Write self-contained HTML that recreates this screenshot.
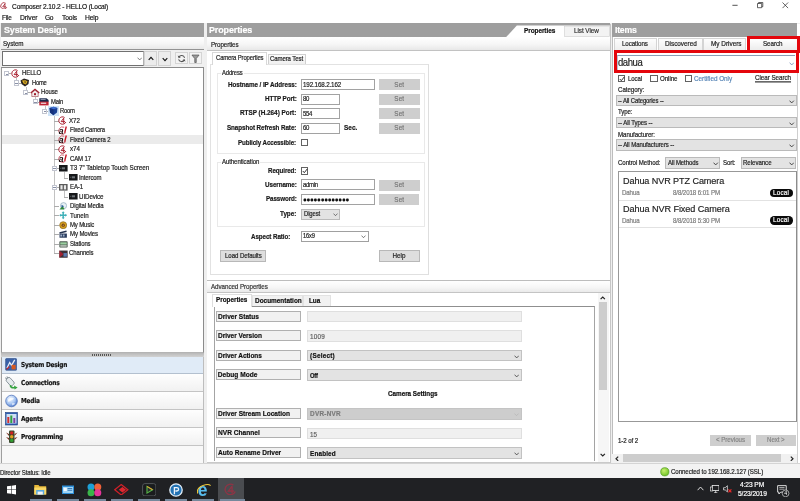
<!DOCTYPE html>
<html><head><meta charset="utf-8"><title>Composer 2.10.2 - HELLO (Local)</title>
<style>
*{box-sizing:border-box;margin:0;padding:0}
html,body{width:800px;height:501px;overflow:hidden;background:#fff}
body{position:relative;font-family:"Liberation Sans",Arial,sans-serif;font-size:6.5px;color:#222;line-height:1}
.a{position:absolute;white-space:nowrap}
.t{-webkit-text-stroke:0.18px currentColor}
.hdr{background:#9e9e9e;height:13.3px;top:23.3px}
.sub{height:12px;top:36.5px;background:linear-gradient(#fff,#f6f6f6 55%,#e8e8e8)}
.inp{background:#fff;border:0.8px solid #a2a2a2}
.btn{background:#cecece}
.cmb{background:#e3e3e3;border:0.6px solid #bababa}
.nav{left:1.5px;width:201.5px;border-bottom:1px solid #c4c4c4;background:linear-gradient(#fefefe,#f1f1f1)}
.pl{background:#f1f1f1;border:0.8px solid #b0b0b0;left:216px;width:84.7px;height:11px}
.pv{left:307.3px;width:214.5px;height:11.5px;margin-top:-0.2px}
.tab{background:linear-gradient(#fdfdfd,#efefef);border:0.6px solid #d0d0d0;border-bottom:none}
.chk{background:#fff;border:0.65px solid #636363;width:7.2px;height:7.2px}
</style></head><body><div id="root" style="position:absolute;left:0;top:0;width:800px;height:501px;will-change:transform">

<div class="a" style="left:0px;top:0px;width:800px;height:11px;background:#fff"></div>
<svg class="a" style="left:0.2px;top:1.6px" width="7.8" height="7.8" viewBox="0 0 9 9"><path d="M6.6 1.5A3.7 3.7 0 1 0 7.9 6" fill="none" stroke="#a2202e" stroke-width="0.95"/><path d="M5.7 2.2L3.1 5.6H7M5.7 2.2V7.4" fill="none" stroke="#a2202e" stroke-width="0.95"/></svg>
<div class="a t" style="left:11.50px;top:1.65px;font-size:7px;letter-spacing:-0.140px;line-height:9.1px;color:#111;transform-origin:0 50%;transform:scale(0.9423,1);">Composer 2.10.2 - HELLO (Local)</div>
<svg class="a" style="left:728px;top:0" width="72" height="11" viewBox="0 0 72 11"><path d="M4.4 5.3h5.2" stroke="#1a1a1a" stroke-width="0.75"/><path d="M29.5 3.5h4.2v4.2h-4.2zM30.6 3.5v-1h4.2v4.2h-1" fill="none" stroke="#222" stroke-width="0.7"/><path d="M54.5 2.5l5.6 5.6M60.1 2.5l-5.6 5.6" stroke="#222" stroke-width="0.7"/></svg>
<div class="a" style="left:0px;top:11px;width:800px;height:12.5px;background:#fff"></div>
<div class="a t" style="left:2.30px;top:12.90px;font-size:7.2px;letter-spacing:-0.236px;line-height:9.4px;color:#111;transform-origin:0 50%;transform:scale(0.8913,1);">File</div>
<div class="a t" style="left:20.00px;top:12.90px;font-size:7.2px;letter-spacing:-0.120px;line-height:9.4px;color:#111;transform-origin:0 50%;transform:scale(0.9469,1);">Driver</div>
<div class="a t" style="left:45.00px;top:12.90px;font-size:7.2px;letter-spacing:-0.284px;line-height:9.4px;color:#111;transform-origin:0 50%;transform:scale(0.9185,1);">Go</div>
<div class="a t" style="left:61.70px;top:12.90px;font-size:7.2px;letter-spacing:-0.155px;line-height:9.4px;color:#111;transform-origin:0 50%;transform:scale(0.9355,1);">Tools</div>
<div class="a t" style="left:85.00px;top:12.90px;font-size:7.2px;letter-spacing:-0.161px;line-height:9.4px;color:#111;transform-origin:0 50%;transform:scale(0.9389,1);">Help</div>
<div class="a" style="left:0px;top:23.1px;width:800px;height:440.4px;background:#efefef"></div>
<div class="a hdr" style="left:1px;width:202.5px"></div>
<div class="a t" style="left:3.50px;top:24.35px;font-size:9.3px;letter-spacing:-0.124px;line-height:12.1px;font-weight:bold;color:#fff;transform-origin:0 50%;transform:scale(0.9651,1.06);">System Design</div>
<div class="a sub" style="left:1px;width:202.5px"></div>
<div class="a t" style="left:2.50px;top:39.75px;font-size:6.5px;letter-spacing:-0.081px;line-height:8.5px;color:#222;transform-origin:0 50%;transform:scale(0.9676,1.12);">System</div>
<div class="a" style="left:1px;top:48.7px;width:203px;height:1.2px;background:#939393"></div>
<div class="a" style="left:1px;top:49.5px;width:202.5px;height:17.5px;background:#f0f0f0"></div>
<div class="a" style="left:2px;top:50.8px;width:141.7px;height:15px;background:#fff;border:1.2px solid #707070;border-right:0.6px solid #b0b0b0"><svg class="a" style="left:133.6px;top:4.9px" width="5.4" height="3.8" viewBox="0 0 5 3.5"><path d="M0.5 0.6L2.5 2.7L4.5 0.6" fill="none" stroke="#555" stroke-width="0.7"/></svg></div>
<div class="a" style="left:144.3px;top:51.3px;width:13px;height:14.3px;background:#ececec;border:0.8px solid #d2d2d2"><svg class="a" style="left:2.8px;top:4.2px" width="6" height="5" viewBox="0 0 6 5"><path d="M0.7 3.8L3 1.3L5.3 3.8" fill="none" stroke="#111" stroke-width="1.1"/></svg></div>
<div class="a" style="left:158px;top:51.3px;width:12.7px;height:14.3px;background:#ececec;border:0.8px solid #d2d2d2"><svg class="a" style="left:2.6px;top:4.4px" width="6" height="5" viewBox="0 0 6 5"><path d="M0.7 1.2L3 3.7L5.3 1.2" fill="none" stroke="#111" stroke-width="1.1"/></svg></div>
<div class="a" style="left:175px;top:52.3px;width:12.6px;height:12px;background:#f3f3f3;border:0.8px solid #d4d4d4"><svg class="a" style="left:1.3px;top:0.9px" width="9.2" height="9.2" viewBox="0 0 8 8"><path d="M6.6 3.4A2.7 2.7 0 0 0 1.6 2.8M1.4 4.6A2.7 2.7 0 0 0 6.4 5.2" fill="none" stroke="#555" stroke-width="0.9"/><path d="M0.6 1.4L1.5 3.6L3.5 2.6zM7.4 6.6L6.5 4.4L4.5 5.4z" fill="#555"/></svg></div>
<div class="a" style="left:189px;top:52.3px;width:12.6px;height:12px;background:#f3f3f3;border:0.8px solid #d4d4d4"><svg class="a" style="left:0.8px;top:0.5px" width="9" height="9.4" viewBox="0 0 8 9"><path d="M0.6 1h6.8L4.7 4.4V8.2H3.3V4.4z" fill="#9a9a9a" stroke="#555" stroke-width="0.7"/></svg></div>
<div class="a" style="left:1px;top:66.7px;width:203px;height:286.3px;background:#fff;border:1.1px solid #8b8b8b;border-left-color:#9a9a9a;border-bottom:0.6px solid #b4b4b4"></div>
<div class="a" style="left:2px;top:134.99px;width:200.5px;height:9.47px;background:#ebebeb"></div>
<div class="a" style="left:16.0px;top:77.64px;width:0;height:2.67px;border-left:0.7px solid #c2c2c2"></div>
<div class="a" style="left:25.5px;top:87.11px;width:0;height:2.67px;border-left:0.7px solid #c2c2c2"></div>
<div class="a" style="left:35.0px;top:96.58px;width:0;height:2.67px;border-left:0.7px solid #c2c2c2"></div>
<div class="a" style="left:44.5px;top:106.05px;width:0;height:2.67px;border-left:0.7px solid #c2c2c2"></div>
<div class="a" style="left:9.1px;top:73.44px;width:2.4000000000000004px;height:0;border-top:0.7px solid #acacac"></div>
<div class="a" style="left:18.6px;top:82.91px;width:2.3999999999999986px;height:0;border-top:0.7px solid #acacac"></div>
<div class="a" style="left:28.1px;top:92.38px;width:2.3999999999999986px;height:0;border-top:0.7px solid #acacac"></div>
<div class="a" style="left:37.6px;top:101.85px;width:2.3999999999999986px;height:0;border-top:0.7px solid #acacac"></div>
<div class="a" style="left:47.1px;top:111.32px;width:2.3999999999999986px;height:0;border-top:0.7px solid #acacac"></div>
<div class="a" style="left:54.0px;top:115.32px;width:0;height:138.05px;border-left:0.7px solid #c2c2c2"></div>
<div class="a" style="left:54.0px;top:120.79px;width:4.5px;height:0;border-top:0.7px solid #acacac"></div>
<div class="a" style="left:54.0px;top:130.26px;width:4.5px;height:0;border-top:0.7px solid #acacac"></div>
<div class="a" style="left:54.0px;top:139.73px;width:4.5px;height:0;border-top:0.7px solid #acacac"></div>
<div class="a" style="left:54.0px;top:149.20px;width:4.5px;height:0;border-top:0.7px solid #acacac"></div>
<div class="a" style="left:54.0px;top:158.67px;width:4.5px;height:0;border-top:0.7px solid #acacac"></div>
<div class="a" style="left:54.0px;top:168.14px;width:4.5px;height:0;border-top:0.7px solid #acacac"></div>
<div class="a" style="left:54.0px;top:187.08px;width:4.5px;height:0;border-top:0.7px solid #acacac"></div>
<div class="a" style="left:54.0px;top:206.02px;width:4.5px;height:0;border-top:0.7px solid #acacac"></div>
<div class="a" style="left:54.0px;top:215.49px;width:4.5px;height:0;border-top:0.7px solid #acacac"></div>
<div class="a" style="left:54.0px;top:224.96px;width:4.5px;height:0;border-top:0.7px solid #acacac"></div>
<div class="a" style="left:54.0px;top:234.43px;width:4.5px;height:0;border-top:0.7px solid #acacac"></div>
<div class="a" style="left:54.0px;top:243.90px;width:4.5px;height:0;border-top:0.7px solid #acacac"></div>
<div class="a" style="left:54.0px;top:253.37px;width:4.5px;height:0;border-top:0.7px solid #acacac"></div>
<div class="a" style="left:63.5px;top:172.14px;width:0;height:5.47px;border-left:0.7px solid #c2c2c2"></div>
<div class="a" style="left:63.5px;top:177.61px;width:4.0px;height:0;border-top:0.7px solid #acacac"></div>
<div class="a" style="left:63.5px;top:191.08px;width:0;height:5.47px;border-left:0.7px solid #c2c2c2"></div>
<div class="a" style="left:63.5px;top:196.55px;width:4.0px;height:0;border-top:0.7px solid #acacac"></div>
<div class="a" style="left:4.0px;top:70.90px;width:5.2px;height:5.2px;border:0.6px solid #c2c5d0;background:#fff"><div class="a" style="left:0.9px;top:1.7px;width:2.2px;height:0.6px;background:#8890a6"></div></div>
<svg class="a" style="left:11.0px;top:69.0px" width="9" height="9" viewBox="0 0 9 9"><path d="M6.6 1.5A3.7 3.7 0 1 0 7.9 6" fill="none" stroke="#a81c2c" stroke-width="0.95"/><path d="M5.7 2.2L3.1 5.6H7M5.7 2.2V7.4" fill="none" stroke="#a81c2c" stroke-width="0.95"/></svg>
<div class="a t" style="left:22.30px;top:69.48px;font-size:6.4px;letter-spacing:-0.151px;line-height:8.3px;color:#222;transform-origin:0 50%;transform:scale(0.9489,1.12);">HELLO</div>
<div class="a" style="left:13.5px;top:80.37px;width:5.2px;height:5.2px;border:0.6px solid #c2c5d0;background:#fff"><div class="a" style="left:0.9px;top:1.7px;width:2.2px;height:0.6px;background:#8890a6"></div></div>
<svg class="a" style="left:20.45px;top:78.47px" width="10" height="9" viewBox="0 0 10 9"><path d="M0.5 2.5L4 0.5L9 2L8.5 6L5 8.5L1.5 6z" fill="#2b2420"/><path d="M2 2.5L5.5 2.2L7.5 3.5L6 6.5L3.5 5.5z" fill="#e0b020"/><path d="M4 3.4L6 3.6L5.2 5.4z" fill="#4a3a20"/></svg>
<div class="a t" style="left:32.00px;top:78.95px;font-size:6.4px;letter-spacing:-0.283px;line-height:8.3px;color:#222;transform-origin:0 50%;transform:scale(0.9096,1.12);">Home</div>
<div class="a" style="left:23.0px;top:89.84px;width:5.2px;height:5.2px;border:0.6px solid #c2c5d0;background:#fff"><div class="a" style="left:0.9px;top:1.7px;width:2.2px;height:0.6px;background:#8890a6"></div></div>
<svg class="a" style="left:29.9px;top:87.94px" width="10" height="9" viewBox="0 0 10 9"><path d="M0.3 4.6L5 0.5L9.7 4.6L8.7 5.4L5 2.2L1.3 5.4z" fill="#a01c2c"/><path d="M1.8 4.8L5 2.2L8.2 4.8V8.6H1.8z" fill="#f4eeee" stroke="#8a2030" stroke-width="0.55"/><rect x="4" y="5.2" width="2" height="2" fill="#a01c2c"/></svg>
<div class="a t" style="left:41.25px;top:88.42px;font-size:6.4px;letter-spacing:-0.148px;line-height:8.3px;color:#222;transform-origin:0 50%;transform:scale(0.9432,1.12);">House</div>
<div class="a" style="left:32.5px;top:99.31px;width:5.2px;height:5.2px;border:0.6px solid #c2c5d0;background:#fff"><div class="a" style="left:0.9px;top:1.7px;width:2.2px;height:0.6px;background:#8890a6"></div></div>
<svg class="a" style="left:39.349999999999994px;top:97.41px" width="10" height="9" viewBox="0 0 10 9"><path d="M0.3 1.2H7.5L9.6 3V5H0.3z" fill="#1c2a4c"/><path d="M1.6 2.4H6.6" stroke="#c8d0e0" stroke-width="0.7"/><path d="M0.3 4.6H9.6V8.4H0.3z" fill="#c02434"/><rect x="1.8" y="5.6" width="5.4" height="1.3" fill="#ecd4d6"/></svg>
<div class="a t" style="left:50.75px;top:97.90px;font-size:6.4px;letter-spacing:-0.174px;line-height:8.3px;color:#222;transform-origin:0 50%;transform:scale(0.9298,1.12);">Main</div>
<div class="a" style="left:42.0px;top:108.78px;width:5.2px;height:5.2px;border:0.6px solid #c2c5d0;background:#fff"><div class="a" style="left:0.9px;top:1.7px;width:2.2px;height:0.6px;background:#8890a6"></div></div>
<svg class="a" style="left:47.8px;top:106.38px" width="11" height="10" viewBox="0 0 11 10"><rect x="0" y="0" width="11" height="10" fill="#cfe3f7"/><path d="M1.5 2L5.5 0.8L9.5 2L9 6.5L5.5 9.2L2 6.5z" fill="#1b3f92"/><path d="M1.5 2L5.5 3.2L9.5 2L5.5 0.8z" fill="#3e6fd0"/><path d="M5.5 3.2V9.2L2 6.5L1.5 2z" fill="#15307a"/></svg>
<div class="a t" style="left:60.25px;top:107.37px;font-size:6.4px;letter-spacing:-0.253px;line-height:8.3px;color:#222;transform-origin:0 50%;transform:scale(0.9184,1.12);">Room</div>
<svg class="a" style="left:57.8px;top:116.35px" width="9" height="9" viewBox="0 0 9 9"><path d="M6.6 1.5A3.7 3.7 0 1 0 7.9 6" fill="none" stroke="#a81c2c" stroke-width="0.95"/><path d="M5.7 2.2L3.1 5.6H7M5.7 2.2V7.4" fill="none" stroke="#a81c2c" stroke-width="0.95"/></svg>
<div class="a t" style="left:69.25px;top:116.84px;font-size:6.4px;letter-spacing:-0.088px;line-height:8.3px;color:#222;transform-origin:0 50%;transform:scale(0.9664,1.12);">X72</div>
<svg class="a" style="left:57.8px;top:125.82px" width="10" height="9" viewBox="0 0 10 9"><path d="M6.2 1.2A3.9 3.7 0 1 0 7.6 7" fill="none" stroke="#c0283a" stroke-width="0.7"/><text x="0.7" y="7.7" font-family="Liberation Sans,sans-serif" font-size="8.6" font-weight="bold" font-style="italic" fill="#1c0a0c">a</text><path d="M8.3 0.5L6.7 6.9" stroke="#c41424" stroke-width="1.35"/></svg>
<div class="a t" style="left:69.50px;top:126.31px;font-size:6.4px;letter-spacing:-0.188px;line-height:8.3px;color:#222;transform-origin:0 50%;transform:scale(0.9225,1.12);">Fixed Camera</div>
<svg class="a" style="left:57.8px;top:135.29px" width="10" height="9" viewBox="0 0 10 9"><path d="M6.2 1.2A3.9 3.7 0 1 0 7.6 7" fill="none" stroke="#c0283a" stroke-width="0.7"/><text x="0.7" y="7.7" font-family="Liberation Sans,sans-serif" font-size="8.6" font-weight="bold" font-style="italic" fill="#1c0a0c">a</text><path d="M8.3 0.5L6.7 6.9" stroke="#c41424" stroke-width="1.35"/></svg>
<div class="a t" style="left:69.50px;top:135.78px;font-size:6.4px;letter-spacing:-0.154px;line-height:8.3px;color:#222;transform-origin:0 50%;transform:scale(0.9337,1.12);">Fixed Camera 2</div>
<svg class="a" style="left:57.8px;top:144.76px" width="9" height="9" viewBox="0 0 9 9"><path d="M6.6 1.5A3.7 3.7 0 1 0 7.9 6" fill="none" stroke="#a81c2c" stroke-width="0.95"/><path d="M5.7 2.2L3.1 5.6H7M5.7 2.2V7.4" fill="none" stroke="#a81c2c" stroke-width="0.95"/></svg>
<div class="a t" style="left:69.50px;top:145.25px;font-size:6.4px;letter-spacing:-0.078px;line-height:8.3px;color:#222;transform-origin:0 50%;transform:scale(0.9669,1.12);">x74</div>
<svg class="a" style="left:57.8px;top:154.23px" width="10" height="9" viewBox="0 0 10 9"><path d="M6.2 1.2A3.9 3.7 0 1 0 7.6 7" fill="none" stroke="#c0283a" stroke-width="0.7"/><text x="0.7" y="7.7" font-family="Liberation Sans,sans-serif" font-size="8.6" font-weight="bold" font-style="italic" fill="#1c0a0c">a</text><path d="M8.3 0.5L6.7 6.9" stroke="#c41424" stroke-width="1.35"/></svg>
<div class="a t" style="left:69.50px;top:154.72px;font-size:6.4px;letter-spacing:-0.149px;line-height:8.3px;color:#222;transform-origin:0 50%;transform:scale(0.9450,1.12);">CAM 17</div>
<div class="a" style="left:51.5px;top:165.60px;width:5.2px;height:5.2px;border:0.6px solid #c2c5d0;background:#fff"><div class="a" style="left:0.9px;top:1.7px;width:2.2px;height:0.6px;background:#8890a6"></div></div>
<svg class="a" style="left:59.0px;top:164.8px" width="10" height="7" viewBox="0 0 10 7"><rect x="0" y="0" width="8.6" height="6.5" fill="#16181a"/><rect x="2.8" y="2.3" width="3.2" height="2" fill="#6d7378"/><rect x="1" y="2.8" width="1.2" height="1" fill="#50555a"/></svg>
<div class="a t" style="left:69.50px;top:164.19px;font-size:6.4px;letter-spacing:-0.037px;line-height:8.3px;color:#222;transform-origin:0 50%;transform:scale(0.9818,1.12);">T3 7" Tabletop Touch Screen</div>
<svg class="a" style="left:68.7px;top:174.27px" width="10" height="7" viewBox="0 0 10 7"><rect x="0" y="0" width="8.6" height="6.5" fill="#16181a"/><rect x="2.8" y="2.3" width="3.2" height="2" fill="#6d7378"/><rect x="1" y="2.8" width="1.2" height="1" fill="#50555a"/></svg>
<div class="a t" style="left:79.00px;top:173.66px;font-size:6.4px;letter-spacing:-0.127px;line-height:8.3px;color:#222;transform-origin:0 50%;transform:scale(0.9422,1.12);">Intercom</div>
<div class="a" style="left:51.5px;top:184.54px;width:5.2px;height:5.2px;border:0.6px solid #c2c5d0;background:#fff"><div class="a" style="left:0.9px;top:1.7px;width:2.2px;height:0.6px;background:#8890a6"></div></div>
<svg class="a" style="left:59.0px;top:183.74px" width="10" height="7" viewBox="0 0 10 7"><rect x="0" y="0" width="8.6" height="6.6" fill="#5a5a5a"/><rect x="1.4" y="1.2" width="2.2" height="4.2" fill="#e8e8e8"/><rect x="4.9" y="1.2" width="2.2" height="4.2" fill="#e8e8e8"/></svg>
<div class="a t" style="left:69.50px;top:183.13px;font-size:6.4px;letter-spacing:-0.130px;line-height:8.3px;color:#222;transform-origin:0 50%;transform:scale(0.9482,1.12);">EA-1</div>
<svg class="a" style="left:68.7px;top:193.21px" width="10" height="7" viewBox="0 0 10 7"><rect x="0" y="0" width="8.6" height="6.5" fill="#16181a"/><rect x="2.8" y="2.3" width="3.2" height="2" fill="#6d7378"/><rect x="1" y="2.8" width="1.2" height="1" fill="#50555a"/></svg>
<div class="a t" style="left:79.00px;top:192.59px;font-size:6.4px;letter-spacing:-0.076px;line-height:8.3px;color:#222;transform-origin:0 50%;transform:scale(0.9662,1.12);">UIDevice</div>
<svg class="a" style="left:59.0px;top:201.98000000000002px" width="8.4" height="8.4" viewBox="0 0 10 10"><circle cx="5.4" cy="4.4" r="3.7" fill="#e9f1f5" stroke="#7fa0b0" stroke-width="0.7"/><path d="M0.5 9L4.5 4.5L6.5 9z" fill="#2f8a3a"/><path d="M3 3.2L6.2 5L3 6.6z" fill="#2a5f9a"/></svg>
<div class="a t" style="left:69.50px;top:202.07px;font-size:6.4px;letter-spacing:-0.114px;line-height:8.3px;color:#222;transform-origin:0 50%;transform:scale(0.9433,1.12);">Digital Media</div>
<svg class="a" style="left:59.0px;top:211.45000000000002px" width="8.4" height="8.4" viewBox="0 0 10 10"><path d="M5 0.3L6.8 2.4H5.9V4.1H7.6V3.2L9.7 5L7.6 6.8V5.9H5.9V7.6H6.8L5 9.7L3.2 7.6H4.1V5.9H2.4V6.8L0.3 5L2.4 3.2V4.1H4.1V2.4H3.2z" fill="#3fb0b8"/></svg>
<div class="a t" style="left:69.50px;top:211.53px;font-size:6.4px;letter-spacing:-0.082px;line-height:8.3px;color:#222;transform-origin:0 50%;transform:scale(0.9638,1.12);">TuneIn</div>
<svg class="a" style="left:59.0px;top:220.92000000000002px" width="8.4" height="8.4" viewBox="0 0 10 10"><circle cx="5" cy="5" r="4.2" fill="#d8a020" stroke="#7a5a10" stroke-width="0.7"/><circle cx="5" cy="5" r="1.9" fill="#6a3a18"/><circle cx="5" cy="5" r="0.7" fill="#e8c050"/></svg>
<div class="a t" style="left:69.50px;top:221.01px;font-size:6.4px;letter-spacing:-0.148px;line-height:8.3px;color:#222;transform-origin:0 50%;transform:scale(0.9385,1.12);">My Music</div>
<svg class="a" style="left:59.0px;top:230.39000000000001px" width="8.4" height="8.4" viewBox="0 0 10 10"><path d="M0.4 2.6L8.8 0.6L9.2 2.4L0.8 4.4z" fill="#23324e"/><rect x="0.6" y="4.2" width="8.8" height="5" fill="#2a3c5e"/><rect x="1.6" y="5.4" width="2" height="2.4" fill="#9fb0c8"/><rect x="4.6" y="5.4" width="2" height="2.4" fill="#9fb0c8"/></svg>
<div class="a t" style="left:69.50px;top:230.47px;font-size:6.4px;letter-spacing:-0.121px;line-height:8.3px;color:#222;transform-origin:0 50%;transform:scale(0.9494,1.12);">My Movies</div>
<svg class="a" style="left:58.8px;top:240.06px" width="9" height="8.1" viewBox="0 0 10 9"><rect x="0.4" y="1.4" width="9.2" height="7" rx="0.8" fill="#4a5a50"/><rect x="1.4" y="2.6" width="7.2" height="2.4" fill="#9ad0a0"/><rect x="1.4" y="5.8" width="7.2" height="1.6" fill="#c8d0c8"/></svg>
<div class="a t" style="left:69.50px;top:239.95px;font-size:6.4px;letter-spacing:-0.141px;line-height:8.3px;color:#222;transform-origin:0 50%;transform:scale(0.9319,1.12);">Stations</div>
<svg class="a" style="left:58.8px;top:249.53px" width="9" height="8.1" viewBox="0 0 10 9"><rect x="0.4" y="0.6" width="9.2" height="8" fill="#3a3036"/><path d="M0.4 0.6L5 4.6L0.4 8.6z" fill="#a02030"/><rect x="5" y="3.4" width="3.8" height="4" fill="#5a7ab0"/></svg>
<div class="a t" style="left:69.30px;top:249.41px;font-size:6.4px;letter-spacing:-0.137px;line-height:8.3px;color:#222;transform-origin:0 50%;transform:scale(0.9425,1.12);">Channels</div>
<div class="a" style="left:1px;top:352.7px;width:203px;height:4.4px;background:linear-gradient(#b9b9b9,#d2d2d2)"></div>
<div class="a" style="left:92px;top:354px;width:19px;height:1.6px;background:repeating-linear-gradient(90deg,#555 0 1px,transparent 1px 2px)"></div>
<div class="a" style="left:1px;top:357px;width:202.5px;height:106.5px;background:#f8f8f8;border:1px solid #bdbdbd;border-left:1px solid #9f9f9f"></div>
<div class="a nav" style="top:357px;height:16.8px;background:#e0ebf7;border-bottom:1px solid #b3c0cf"></div>
<div class="a t" style="left:20.75px;top:361.40px;font-size:6.3px;letter-spacing:-0.219px;line-height:8.2px;font-weight:bold;color:#111;font-family:&quot;DejaVu Sans&quot;,sans-serif;transform-origin:0 50%;transform:scale(0.9251,1.08);">System Design</div>
<div class="a nav" style="top:374.3px;height:17.8px"></div>
<div class="a t" style="left:20.90px;top:379.20px;font-size:6.3px;letter-spacing:-0.194px;line-height:8.2px;font-weight:bold;color:#111;font-family:&quot;DejaVu Sans&quot;,sans-serif;transform-origin:0 50%;transform:scale(0.9318,1.08);">Connections</div>
<div class="a nav" style="top:392.3px;height:17.5px"></div>
<div class="a t" style="left:20.90px;top:396.60px;font-size:6.3px;letter-spacing:-0.249px;line-height:8.2px;font-weight:bold;color:#111;font-family:&quot;DejaVu Sans&quot;,sans-serif;transform-origin:0 50%;transform:scale(0.9200,1.08);">Media</div>
<div class="a nav" style="top:410.2px;height:17.5px"></div>
<div class="a t" style="left:20.90px;top:414.90px;font-size:6.3px;letter-spacing:-0.216px;line-height:8.2px;font-weight:bold;color:#111;font-family:&quot;DejaVu Sans&quot;,sans-serif;transform-origin:0 50%;transform:scale(0.9276,1.08);">Agents</div>
<div class="a nav" style="top:428px;height:17.8px"></div>
<div class="a t" style="left:20.90px;top:432.80px;font-size:6.3px;letter-spacing:-0.244px;line-height:8.2px;font-weight:bold;color:#111;font-family:&quot;DejaVu Sans&quot;,sans-serif;transform-origin:0 50%;transform:scale(0.9228,1.08);">Programming</div>
<svg class="a" style="left:5px;top:358.3px" width="12.2" height="12.8" viewBox="0 0 13 14"><rect x="0.5" y="0.5" width="12" height="13" rx="1" fill="#3a62a8" stroke="#22407a" stroke-width="0.6"/><path d="M2 11L5 5L7 8L10.5 2" fill="none" stroke="#e8eef8" stroke-width="1.4"/><rect x="7" y="7.5" width="4.5" height="5" fill="#d85a20"/><path d="M1.5 12.5L4.5 9.5" stroke="#d82020" stroke-width="1.3"/></svg>
<svg class="a" style="left:5px;top:376px" width="13" height="14" viewBox="0 0 13 14"><g transform="rotate(-42 5.5 6)"><rect x="3" y="1.2" width="5" height="8.6" rx="1.6" fill="#e6eaec" stroke="#7c8890" stroke-width="0.8"/><rect x="4.2" y="-0.6" width="0.9" height="2" fill="#7c8890"/><rect x="5.9" y="-0.6" width="0.9" height="2" fill="#7c8890"/></g><path d="M5.2 9.2Q6.2 12.6 10 11.6" fill="none" stroke="#35a33f" stroke-width="1.5"/><path d="M9 9.4L12.6 11.4L9.6 13.6z" fill="#35a33f"/></svg>
<svg class="a" style="left:5px;top:394px" width="13" height="14" viewBox="0 0 13 14"><defs><radialGradient id="mg" cx="0.4" cy="0.32" r="0.75"><stop offset="0" stop-color="#f4f8ff"/><stop offset="0.55" stop-color="#a8c6f2"/><stop offset="1" stop-color="#3f6cc4"/></radialGradient></defs><circle cx="6.5" cy="7" r="5.8" fill="url(#mg)" stroke="#4468b4" stroke-width="0.7"/><path d="M3 5.5Q6 3 9 4.2Q8 6.2 5.8 6.6Q4.4 8.2 3 7.6z" fill="#ffffff" opacity="0.75"/><path d="M7 9.2Q9 8.4 10.2 9.6Q9 11.6 7 11.2z" fill="#eef4ff" opacity="0.7"/></svg>
<svg class="a" style="left:5px;top:411.7px" width="13" height="14" viewBox="0 0 13 14"><rect x="0.5" y="0.5" width="12" height="12.5" fill="#2f5fb0" stroke="#1f3f80" stroke-width="0.6"/><rect x="1.5" y="2" width="10" height="9.5" fill="#cfe0f5"/><rect x="2.3" y="5" width="2" height="6" fill="#d03030"/><rect x="5.3" y="3.5" width="2" height="7.5" fill="#30a040"/><rect x="8.3" y="6" width="2" height="5" fill="#8040a0"/></svg>
<svg class="a" style="left:5px;top:429.5px" width="13" height="14" viewBox="0 0 13 14"><rect x="4" y="0.5" width="5.5" height="12.5" rx="1" fill="#3a4a30"/><circle cx="6.7" cy="3" r="1.7" fill="#d02020"/><circle cx="6.7" cy="6.7" r="1.7" fill="#e0a020"/><circle cx="6.7" cy="10.4" r="1.7" fill="#30a030"/><path d="M1 2.5L4 4V6zM12.5 2.5L9.5 4V6zM1 7L4 8V10zM12.5 7L9.5 8V10z" fill="#7a3020"/></svg>
<div class="a" style="left:206.5px;top:23.5px;width:403px;height:439.5px;background:#fff"></div>
<div class="a hdr" style="left:206.5px;width:403px"></div>
<div class="a t" style="left:208.75px;top:24.35px;font-size:9.3px;letter-spacing:-0.114px;line-height:12.1px;font-weight:bold;color:#fff;transform-origin:0 50%;transform:scale(0.9641,1.06);">Properties</div>
<svg class="a" style="left:500px;top:23.1px" width="110" height="14.4" viewBox="0 0 110 14.4"><path d="M16.8 2.6H110V14.4H5.8z" fill="#fff"/><rect x="64.6" y="3.1" width="45" height="10.5" fill="#f3f3f3" stroke="#cdcdcd" stroke-width="0.6"/></svg>
<div class="a t" style="left:524.25px;top:26.65px;font-size:6.7px;letter-spacing:-0.078px;line-height:8.7px;font-weight:bold;color:#111;transform-origin:0 50%;transform:scale(0.9658,1.1);">Properties</div>
<div class="a t" style="left:574.25px;top:26.70px;font-size:6.6px;letter-spacing:-0.071px;line-height:8.6px;color:#333;transform-origin:0 50%;transform:scale(0.9648,1.05);">List View</div>
<div class="a sub" style="left:206.5px;width:403px;height:13.5px"></div>
<div class="a t" style="left:211.25px;top:40.55px;font-size:6.5px;letter-spacing:-0.089px;line-height:8.5px;color:#222;transform-origin:0 50%;transform:scale(0.9570,1.12);">Properties</div>
<div class="a" style="left:206.5px;top:50.2px;width:403px;height:1px;background:#c2c2c2"></div>
<div class="a" style="left:210px;top:64px;width:219px;height:211px;background:#fff;border:0.8px solid #e2e2e2;border-right:1.4px solid #dedede;border-bottom:1.4px solid #e0e0e0"></div>
<div class="a tab" style="left:211.5px;top:52px;width:55.5px;height:12.6px;background:#fff;border-color:#d8d8d8"></div>
<div class="a tab" style="left:267.5px;top:54.3px;width:38.5px;height:9.8px"></div>
<div class="a t" style="left:215.50px;top:54.45px;font-size:6.4px;letter-spacing:-0.157px;line-height:8.3px;color:#222;transform-origin:0 50%;transform:scale(0.9306,1.12);">Camera Properties</div>
<div class="a t" style="left:270.00px;top:55.45px;font-size:6.4px;letter-spacing:-0.121px;line-height:8.3px;color:#222;transform-origin:0 50%;transform:scale(0.9475,1.12);">Camera Test</div>
<div class="a" style="left:217px;top:72.5px;width:207.5px;height:81px;border:0.8px solid #e9e9e9"></div>
<div class="a" style="left:221px;top:70.5px;width:22.5px;height:4px;background:#fff"></div>
<div class="a t" style="left:222.00px;top:68.60px;font-size:6.3px;letter-spacing:-0.160px;line-height:8.2px;color:#222;transform-origin:0 50%;transform:scale(0.9322,1.12);">Address</div>
<div class="a" style="left:217px;top:161.5px;width:207.5px;height:65px;border:0.8px solid #e9e9e9"></div>
<div class="a" style="left:221px;top:159.5px;width:39.25px;height:4px;background:#fff"></div>
<div class="a t" style="left:222.00px;top:157.60px;font-size:6.3px;letter-spacing:-0.080px;line-height:8.2px;color:#222;transform-origin:0 50%;transform:scale(0.9597,1.12);">Authentication</div>
<div class="a t" style="left:227.50px;top:80.75px;font-size:6.5px;letter-spacing:-0.071px;line-height:8.5px;font-weight:bold;color:#1a1a1a;transform-origin:0 50%;transform:scale(0.9686,1.2);">Hostname / IP Address:</div>
<div class="a inp" style="left:301px;top:79.4px;width:73.5px;height:10.9px"></div>
<div class="a t" style="left:303.10px;top:80.80px;font-size:6.7px;letter-spacing:-0.155px;line-height:8.7px;color:#1c1c1c;transform-origin:0 50%;transform:scale(0.9342,1.12);">192.168.2.162</div>
<div class="a btn" style="left:379px;top:79.1px;width:40.5px;height:11px;"></div>
<div class="a t" style="left:394.30px;top:80.60px;font-size:6.3px;letter-spacing:0.148px;line-height:8.2px;color:#757575;transform:scaleY(1.12);">Set</div>
<div class="a t" style="left:264.50px;top:95.05px;font-size:6.5px;letter-spacing:-0.084px;line-height:8.5px;font-weight:bold;color:#1a1a1a;transform-origin:0 50%;transform:scale(0.9641,1.2);">HTTP Port:</div>
<div class="a inp" style="left:301px;top:93.7px;width:38.5px;height:10.9px"></div>
<div class="a t" style="left:303.10px;top:95.10px;font-size:6.7px;letter-spacing:-0.291px;line-height:8.7px;color:#1c1c1c;transform-origin:0 50%;transform:scale(0.8951,1.12);">80</div>
<div class="a btn" style="left:379px;top:93.7px;width:40.5px;height:11px;"></div>
<div class="a t" style="left:394.30px;top:95.20px;font-size:6.3px;letter-spacing:0.148px;line-height:8.2px;color:#757575;transform:scaleY(1.12);">Set</div>
<div class="a t" style="left:240.00px;top:109.45px;font-size:6.5px;letter-spacing:-0.031px;line-height:8.5px;font-weight:bold;color:#1a1a1a;transform-origin:0 50%;transform:scale(0.9858,1.2);">RTSP (H.264) Port:</div>
<div class="a inp" style="left:301px;top:108.2px;width:38.5px;height:10.9px"></div>
<div class="a t" style="left:303.10px;top:109.60px;font-size:6.7px;letter-spacing:-0.295px;line-height:8.7px;color:#1c1c1c;transform-origin:0 50%;transform:scale(0.8938,1.12);">554</div>
<div class="a btn" style="left:379px;top:108.2px;width:40.5px;height:11px;"></div>
<div class="a t" style="left:394.30px;top:109.70px;font-size:6.3px;letter-spacing:0.148px;line-height:8.2px;color:#757575;transform:scaleY(1.12);">Set</div>
<div class="a t" style="left:227.00px;top:124.35px;font-size:6.5px;letter-spacing:-0.083px;line-height:8.5px;font-weight:bold;color:#1a1a1a;transform-origin:0 50%;transform:scale(0.9643,1.2);">Snapshot Refresh Rate:</div>
<div class="a inp" style="left:301px;top:122.7px;width:38.5px;height:10.9px"></div>
<div class="a t" style="left:303.10px;top:124.10px;font-size:6.7px;letter-spacing:-0.291px;line-height:8.7px;color:#1c1c1c;transform-origin:0 50%;transform:scale(0.8951,1.12);">60</div>
<div class="a btn" style="left:379px;top:122.8px;width:40.5px;height:11px;"></div>
<div class="a t" style="left:394.30px;top:124.30px;font-size:6.3px;letter-spacing:0.148px;line-height:8.2px;color:#757575;transform:scaleY(1.12);">Set</div>
<div class="a t" style="left:344.25px;top:124.35px;font-size:6.5px;letter-spacing:-0.012px;line-height:8.5px;font-weight:bold;color:#1a1a1a;transform-origin:0 50%;transform:scale(0.9946,1.2);">Sec.</div>
<div class="a t" style="left:238.25px;top:138.75px;font-size:6.5px;letter-spacing:-0.096px;line-height:8.5px;font-weight:bold;color:#1a1a1a;transform-origin:0 50%;transform:scale(0.9562,1.2);">Publicly Accessible:</div>
<div class="a chk" style="left:301.2px;top:139.3px"></div>
<div class="a t" style="left:268.00px;top:166.95px;font-size:6.5px;letter-spacing:-0.094px;line-height:8.5px;font-weight:bold;color:#1a1a1a;transform-origin:0 50%;transform:scale(0.9597,1.2);">Required:</div>
<div class="a chk" style="left:301.2px;top:167.4px"><svg class="a" style="left:0.1px;top:0.1px" width="6" height="6" viewBox="0 0 6 6"><path d="M0.8 3L2.3 4.7L5.2 1" fill="none" stroke="#2a2a2a" stroke-width="0.95"/></svg></div>
<div class="a t" style="left:264.50px;top:181.15px;font-size:6.5px;letter-spacing:-0.083px;line-height:8.5px;font-weight:bold;color:#1a1a1a;transform-origin:0 50%;transform:scale(0.9679,1.2);">Username:</div>
<div class="a inp" style="left:301px;top:179.4px;width:73.5px;height:10.9px"></div>
<div class="a t" style="left:303.10px;top:180.80px;font-size:6.7px;letter-spacing:-0.301px;line-height:8.7px;color:#1c1c1c;transform-origin:0 50%;transform:scale(0.8899,1.12);">admin</div>
<div class="a btn" style="left:379px;top:179.5px;width:40.5px;height:11px;"></div>
<div class="a t" style="left:394.30px;top:181.00px;font-size:6.3px;letter-spacing:0.148px;line-height:8.2px;color:#757575;transform:scaleY(1.12);">Set</div>
<div class="a t" style="left:265.50px;top:195.35px;font-size:6.5px;letter-spacing:-0.096px;line-height:8.5px;font-weight:bold;color:#1a1a1a;transform-origin:0 50%;transform:scale(0.9622,1.2);">Password:</div>
<div class="a inp" style="left:301px;top:193.7px;width:73.5px;height:10.9px"></div>
<div class="a btn" style="left:378.5px;top:194px;width:40px;height:11px;"></div>
<div class="a t" style="left:394.30px;top:195.50px;font-size:6.3px;letter-spacing:0.148px;line-height:8.2px;color:#757575;transform:scaleY(1.12);">Set</div>
<div class="a t" style="left:303.20px;top:197.55px;font-size:3.8px;letter-spacing:0.230px;line-height:4.9px;color:#111;font-family:&quot;DejaVu Sans&quot;,sans-serif;-webkit-text-stroke:0;transform:scaleY(1.08);">●●●●●●●●●●●●●</div>
<div class="a t" style="left:280.00px;top:209.55px;font-size:6.5px;letter-spacing:-0.045px;line-height:8.5px;font-weight:bold;color:#1a1a1a;transform-origin:0 50%;transform:scale(0.9803,1.2);">Type:</div>
<div class="a cmb" style="left:301px;top:208.7px;width:38.5px;height:11px"><svg class="a" style="left:30.5px;top:3.6px" width="5" height="3.5" viewBox="0 0 5 3.5"><path d="M0.5 0.6L2.5 2.7L4.5 0.6" fill="none" stroke="#444" stroke-width="0.7"/></svg></div>
<div class="a t" style="left:303.50px;top:210.30px;font-size:6.3px;letter-spacing:-0.132px;line-height:8.2px;color:#222;transform-origin:0 50%;transform:scale(0.9376,1.12);">Digest</div>
<div class="a t" style="left:251.25px;top:232.55px;font-size:6.5px;letter-spacing:-0.085px;line-height:8.5px;font-weight:bold;color:#1a1a1a;transform-origin:0 50%;transform:scale(0.9621,1.2);">Aspect Ratio:</div>
<div class="a inp" style="left:301px;top:230.8px;width:67.5px;height:11.2px;border-color:#a0a0a0"><svg class="a" style="left:59px;top:3.4px" width="5" height="3.5" viewBox="0 0 5 3.5"><path d="M0.5 0.6L2.5 2.7L4.5 0.6" fill="none" stroke="#444" stroke-width="0.7"/></svg></div>
<div class="a t" style="left:303.30px;top:232.10px;font-size:6.3px;letter-spacing:-0.215px;line-height:8.2px;color:#222;transform-origin:0 50%;transform:scale(0.9139,1.12);">16x9</div>
<div class="a btn" style="left:220px;top:250.4px;width:45.5px;height:11px;background:#dedede;border:0.6px solid #b8b8b8;height:11.4px"></div>
<div class="a t" style="left:225.00px;top:251.90px;font-size:6.3px;letter-spacing:-0.068px;line-height:8.2px;color:#222;transform-origin:0 50%;transform:scale(0.9672,1.12);">Load Defaults</div>
<div class="a btn" style="left:379px;top:250.4px;width:40.5px;height:11px;background:#dedede;border:0.6px solid #b8b8b8;height:11.4px"></div>
<div class="a t" style="left:392.50px;top:251.90px;font-size:6.3px;letter-spacing:0.011px;line-height:8.2px;color:#222;transform:scaleY(1.12);">Help</div>
<div class="a" style="left:206.5px;top:280px;width:403px;height:12.5px;background:linear-gradient(#fff,#f7f7f7 55%,#eaeaea);border-top:1px solid #bdbdbd;border-bottom:1px solid #c4c4c4"></div>
<div class="a t" style="left:210.75px;top:282.85px;font-size:6.5px;letter-spacing:-0.078px;line-height:8.5px;color:#333;transform-origin:0 50%;transform:scale(0.9643,1.12);">Advanced Properties</div>
<div class="a tab" style="left:251.5px;top:294.8px;width:51px;height:11.5px;background:#f1f1f1;border-color:#e2e2e2"></div>
<div class="a tab" style="left:303px;top:294.8px;width:27.5px;height:11.5px;background:#f1f1f1;border-color:#e2e2e2"></div>
<div class="a" style="left:213.5px;top:306px;width:381px;height:154.5px;background:#fff;border:0.8px solid #a4a4a4;border-top-color:#8f8f8f;border-bottom:none"></div>
<div class="a tab" style="left:211.5px;top:293.8px;width:40px;height:13px;background:#fff;border-color:#dedede"></div>
<div class="a t" style="left:216.25px;top:295.95px;font-size:6.5px;letter-spacing:-0.037px;line-height:8.5px;font-weight:bold;color:#111;transform-origin:0 50%;transform:scale(0.9832,1.2);">Properties</div>
<div class="a t" style="left:254.50px;top:296.95px;font-size:6.5px;letter-spacing:-0.017px;line-height:8.5px;font-weight:bold;color:#111;transform-origin:0 50%;transform:scale(0.9929,1.2);">Documentation</div>
<div class="a t" style="left:308.75px;top:296.95px;font-size:6.5px;letter-spacing:-0.041px;line-height:8.5px;font-weight:bold;color:#111;transform-origin:0 50%;transform:scale(0.9841,1.2);">Lua</div>
<div class="a" style="left:206.5px;top:461.8px;width:403px;height:1px;background:#c9c9c9"></div>
<div class="a pl" style="top:310.7px"></div>
<div class="a t" style="left:217.80px;top:312.60px;font-size:6.6px;letter-spacing:-0.004px;line-height:8.6px;font-weight:bold;color:#111;transform-origin:0 50%;transform:scale(0.9981,1.2);">Driver Status</div>
<div class="a pv" style="top:310.7px;background:#f0f0f0;border:0.6px solid #dfdfdf"></div>
<div class="a pl" style="top:330.4px"></div>
<div class="a t" style="left:217.80px;top:332.30px;font-size:6.6px;letter-spacing:-0.023px;line-height:8.6px;font-weight:bold;color:#111;transform-origin:0 50%;transform:scale(0.9892,1.2);">Driver Version</div>
<div class="a pv" style="top:330.4px;background:#f0f0f0;border:0.6px solid #dfdfdf"></div>
<div class="a t" style="left:310.10px;top:332.85px;font-size:6.4px;letter-spacing:0.166px;line-height:8.3px;color:#626262;transform:scaleY(1.12);">1009</div>
<div class="a pl" style="top:349.7px"></div>
<div class="a t" style="left:217.80px;top:351.60px;font-size:6.6px;letter-spacing:-0.027px;line-height:8.6px;font-weight:bold;color:#111;transform-origin:0 50%;transform:scale(0.9877,1.2);">Driver Actions</div>
<div class="a pv" style="top:349.7px;background:#e3e3e3;border:0.7px solid #c2c2c2"><svg class="a" style="left:205.3px;top:4px" width="5.4" height="3.8" viewBox="0 0 5 3.5"><path d="M0.5 0.6L2.5 2.7L4.5 0.6" fill="none" stroke="#333" stroke-width="0.7"/></svg></div>
<div class="a t" style="left:310.10px;top:351.95px;font-size:6.4px;letter-spacing:0.223px;line-height:8.3px;font-weight:bold;color:#111;transform:scaleY(1.2);">(Select)</div>
<div class="a pl" style="top:369.3px"></div>
<div class="a t" style="left:217.80px;top:371.20px;font-size:6.6px;letter-spacing:0.010px;line-height:8.6px;font-weight:bold;color:#111;transform:scaleY(1.2);">Debug Mode</div>
<div class="a pv" style="top:369.3px;background:#e3e3e3;border:0.7px solid #c2c2c2"><svg class="a" style="left:205.3px;top:4px" width="5.4" height="3.8" viewBox="0 0 5 3.5"><path d="M0.5 0.6L2.5 2.7L4.5 0.6" fill="none" stroke="#333" stroke-width="0.7"/></svg></div>
<div class="a t" style="left:310.10px;top:371.55px;font-size:6.4px;letter-spacing:-0.196px;line-height:8.3px;font-weight:bold;color:#111;transform-origin:0 50%;transform:scale(0.9129,1.2);">Off</div>
<div class="a pl" style="top:407.6px"></div>
<div class="a t" style="left:217.80px;top:409.50px;font-size:6.6px;letter-spacing:-0.011px;line-height:8.6px;font-weight:bold;color:#111;transform-origin:0 50%;transform:scale(0.9949,1.2);">Driver Stream Location</div>
<div class="a pv" style="top:408.4px;background:#cdcdcd;border:0.6px solid #c4c4c4"><svg class="a" style="left:205.5px;top:3.8px" width="5" height="3.5" viewBox="0 0 5 3.5"><path d="M0.5 0.6L2.5 2.7L4.5 0.6" fill="none" stroke="#b5b5b5" stroke-width="0.7"/></svg></div>
<div class="a t" style="left:310.10px;top:410.45px;font-size:6.4px;letter-spacing:0.235px;line-height:8.3px;font-weight:bold;color:#7a7a7a;transform:scaleY(1.2);">DVR-NVR</div>
<div class="a pl" style="top:427.3px"></div>
<div class="a t" style="left:217.80px;top:429.20px;font-size:6.6px;letter-spacing:-0.000px;line-height:8.6px;font-weight:bold;color:#111;transform-origin:0 50%;transform:scale(0.9999,1.2);">NVR Channel</div>
<div class="a pv" style="top:428.1px;background:#f0f0f0;border:0.6px solid #dfdfdf"></div>
<div class="a t" style="left:310.10px;top:430.55px;font-size:6.4px;letter-spacing:-0.045px;line-height:8.3px;color:#626262;transform-origin:0 50%;transform:scale(0.9816,1.12);">15</div>
<div class="a pl" style="top:446.6px"></div>
<div class="a t" style="left:217.80px;top:448.50px;font-size:6.6px;letter-spacing:-0.006px;line-height:8.6px;font-weight:bold;color:#111;transform-origin:0 50%;transform:scale(0.9976,1.2);">Auto Rename Driver</div>
<div class="a pv" style="top:447.4px;background:#e3e3e3;border:0.7px solid #c2c2c2"><svg class="a" style="left:205.3px;top:4px" width="5.4" height="3.8" viewBox="0 0 5 3.5"><path d="M0.5 0.6L2.5 2.7L4.5 0.6" fill="none" stroke="#333" stroke-width="0.7"/></svg></div>
<div class="a t" style="left:310.10px;top:449.65px;font-size:6.4px;letter-spacing:0.115px;line-height:8.3px;font-weight:bold;color:#111;transform:scaleY(1.2);">Enabled</div>
<div class="a t" style="left:388.20px;top:389.55px;font-size:6.5px;letter-spacing:-0.049px;line-height:8.5px;font-weight:bold;color:#111;transform-origin:0 50%;transform:scale(0.9790,1.2);">Camera Settings</div>
<div class="a" style="left:598px;top:293px;width:11px;height:168.5px;background:#f6f6f6"></div>
<div class="a" style="left:609.6px;top:23.5px;width:0.9px;height:439.5px;background:#c6c6c6"></div>
<div class="a" style="left:599.3px;top:302.3px;width:7.9px;height:87.7px;background:#cdcdcd"></div>
<svg class="a" style="left:600.3px;top:295.5px" width="5.5" height="4" viewBox="0 0 5.5 4"><path d="M0.6 3.2L2.75 1L4.9 3.2" fill="none" stroke="#222" stroke-width="1.15"/></svg>
<svg class="a" style="left:600.3px;top:453.3px" width="5.5" height="4" viewBox="0 0 5.5 4"><path d="M0.6 0.8L2.75 3L4.9 0.8" fill="none" stroke="#222" stroke-width="1.15"/></svg>
<div class="a" style="left:611.5px;top:23.5px;width:188.5px;height:439.5px;background:#fff;border-left:0.9px solid #bdbdbd"></div>
<div class="a hdr" style="left:612.3px;width:184.7px"></div>
<div class="a t" style="left:614.80px;top:24.25px;font-size:9.3px;letter-spacing:-0.231px;line-height:12.1px;font-weight:bold;color:#fff;transform-origin:0 50%;transform:scale(0.9335,1.06);">Items</div>
<div class="a tab" style="left:613.7px;top:38.2px;width:43.6px;height:11.5px;border-color:#d4d4d4"></div>
<div class="a t" style="left:621.80px;top:39.95px;font-size:6.5px;letter-spacing:-0.094px;line-height:8.5px;color:#222;transform-origin:0 50%;transform:scale(0.9563,1.12);">Locations</div>
<div class="a tab" style="left:657.6px;top:38.2px;width:45.4px;height:11.5px;border-color:#d4d4d4"></div>
<div class="a t" style="left:664.80px;top:39.95px;font-size:6.5px;letter-spacing:-0.033px;line-height:8.5px;color:#222;transform-origin:0 50%;transform:scale(0.9850,1.12);">Discovered</div>
<div class="a tab" style="left:703.3px;top:38.2px;width:42.5px;height:11.5px;border-color:#d4d4d4"></div>
<div class="a t" style="left:711.00px;top:39.95px;font-size:6.5px;letter-spacing:-0.022px;line-height:8.5px;color:#222;transform-origin:0 50%;transform:scale(0.9893,1.12);">My Drivers</div>
<div class="a" style="left:746.7px;top:35.6px;width:52.9px;height:17px;border:3px solid #e4060c;background:linear-gradient(#fff,#ececec)"></div>
<div class="a t" style="left:763.25px;top:39.95px;font-size:6.5px;letter-spacing:-0.075px;line-height:8.5px;color:#222;transform-origin:0 50%;transform:scale(0.9681,1.12);">Search</div>
<div class="a" style="left:614px;top:50px;width:184.5px;height:23.2px;border:3.1px solid #e4060c;background:#fff"></div>
<div class="a" style="left:617.3px;top:54.5px;width:178px;height:15.3px;border-top:0.8px solid #8a9db5;border-left:0.6px solid #b5c2d4"></div>
<div class="a t" style="left:618.30px;top:56.05px;font-size:10.7px;letter-spacing:-0.480px;line-height:13.9px;color:#222;transform-origin:0 50%;transform:scale(0.8920,1);">dahua</div>
<svg class="a" style="left:788.8px;top:61.6px" width="5.5" height="3.8" viewBox="0 0 5 3.5"><path d="M0.5 0.6L2.5 2.7L4.5 0.6" fill="none" stroke="#6a86b0" stroke-width="0.7"/></svg>
<div class="a chk" style="left:618.3px;top:75.2px"><svg class="a" style="left:0.1px;top:0.1px" width="6" height="6" viewBox="0 0 6 6"><path d="M0.8 3L2.3 4.7L5.2 1" fill="none" stroke="#2a2a2a" stroke-width="0.95"/></svg></div>
<div class="a chk" style="left:650.4px;top:75.2px"></div>
<div class="a chk" style="left:684.9px;top:75.2px"></div>
<div class="a t" style="left:628.00px;top:74.95px;font-size:6.5px;letter-spacing:-0.131px;line-height:8.5px;color:#222;transform-origin:0 50%;transform:scale(0.9406,1.12);">Local</div>
<div class="a t" style="left:660.20px;top:74.95px;font-size:6.5px;letter-spacing:-0.097px;line-height:8.5px;color:#222;transform-origin:0 50%;transform:scale(0.9556,1.12);">Online</div>
<div class="a t" style="left:694.40px;top:74.95px;font-size:6.5px;letter-spacing:-0.037px;line-height:8.5px;color:#5b88b8;transform-origin:0 50%;transform:scale(0.9806,1.12);">Certified Only</div>
<div class="a t" style="left:754.50px;top:74.25px;font-size:6.5px;letter-spacing:-0.066px;line-height:8.5px;color:#222;text-decoration:underline;text-underline-offset:0.7px;text-decoration-thickness:0.55px;transform-origin:0 50%;transform:scale(0.9694,1.12);">Clear Search</div>
<div class="a t" style="left:617.50px;top:85.65px;font-size:6.4px;letter-spacing:-0.069px;line-height:8.3px;color:#222;transform-origin:0 50%;transform:scale(0.9676,1.12);">Category:</div>
<div class="a cmb" style="left:616px;top:94.8px;width:180.5px;height:11.5px"><svg class="a" style="left:172.3px;top:3.9px" width="5.4" height="3.8" viewBox="0 0 5 3.5"><path d="M0.5 0.6L2.5 2.7L4.5 0.6" fill="none" stroke="#3a3a3a" stroke-width="0.85"/></svg></div>
<div class="a t" style="left:618.00px;top:96.70px;font-size:6.3px;letter-spacing:-0.107px;line-height:8.2px;color:#222;transform-origin:0 50%;transform:scale(0.9407,1.12);">-- All Categories --</div>
<div class="a t" style="left:617.50px;top:108.25px;font-size:6.4px;letter-spacing:-0.119px;line-height:8.3px;color:#222;transform-origin:0 50%;transform:scale(0.9462,1.12);">Type:</div>
<div class="a cmb" style="left:616px;top:116.9px;width:180.5px;height:11.5px"><svg class="a" style="left:172.3px;top:3.9px" width="5.4" height="3.8" viewBox="0 0 5 3.5"><path d="M0.5 0.6L2.5 2.7L4.5 0.6" fill="none" stroke="#3a3a3a" stroke-width="0.85"/></svg></div>
<div class="a t" style="left:618.00px;top:118.80px;font-size:6.3px;letter-spacing:-0.069px;line-height:8.2px;color:#222;transform-origin:0 50%;transform:scale(0.9596,1.12);">-- All Types --</div>
<div class="a t" style="left:617.50px;top:130.65px;font-size:6.4px;letter-spacing:-0.079px;line-height:8.3px;color:#222;transform-origin:0 50%;transform:scale(0.9622,1.12);">Manufacturer:</div>
<div class="a cmb" style="left:616px;top:139.1px;width:180.5px;height:11.5px"><svg class="a" style="left:172.3px;top:3.9px" width="5.4" height="3.8" viewBox="0 0 5 3.5"><path d="M0.5 0.6L2.5 2.7L4.5 0.6" fill="none" stroke="#3a3a3a" stroke-width="0.85"/></svg></div>
<div class="a t" style="left:618.00px;top:141.00px;font-size:6.3px;letter-spacing:-0.078px;line-height:8.2px;color:#222;transform-origin:0 50%;transform:scale(0.9573,1.12);">-- All Manufacturers --</div>
<div class="a t" style="left:617.50px;top:159.15px;font-size:6.4px;letter-spacing:-0.084px;line-height:8.3px;color:#222;transform-origin:0 50%;transform:scale(0.9600,1.12);">Control Method:</div>
<div class="a cmb" style="left:665.2px;top:157px;width:55.3px;height:11.5px"><svg class="a" style="left:47.099999999999994px;top:3.9px" width="5.4" height="3.8" viewBox="0 0 5 3.5"><path d="M0.5 0.6L2.5 2.7L4.5 0.6" fill="none" stroke="#3a3a3a" stroke-width="0.85"/></svg></div>
<div class="a t" style="left:667.70px;top:158.90px;font-size:6.3px;letter-spacing:-0.100px;line-height:8.2px;color:#222;transform-origin:0 50%;transform:scale(0.9523,1.12);">All Methods</div>
<div class="a t" style="left:723.25px;top:158.65px;font-size:6.4px;letter-spacing:-0.085px;line-height:8.3px;color:#222;transform-origin:0 50%;transform:scale(0.9549,1.12);">Sort:</div>
<div class="a cmb" style="left:741px;top:157px;width:55px;height:11.5px"><svg class="a" style="left:46.8px;top:3.9px" width="5.4" height="3.8" viewBox="0 0 5 3.5"><path d="M0.5 0.6L2.5 2.7L4.5 0.6" fill="none" stroke="#3a3a3a" stroke-width="0.85"/></svg></div>
<div class="a t" style="left:743.25px;top:158.90px;font-size:6.3px;letter-spacing:-0.058px;line-height:8.2px;color:#222;transform-origin:0 50%;transform:scale(0.9744,1.12);">Relevance</div>
<div class="a" style="left:797.4px;top:73.4px;width:0.9px;height:389.6px;background:#cfcfcf"></div>
<div class="a" style="left:618px;top:171.3px;width:178.6px;height:251.2px;background:#fff;border:0.9px solid #989898;border-right:1.2px solid #8c8c8c"></div>
<div class="a t" style="left:622.50px;top:175.15px;font-size:9.3px;letter-spacing:-0.086px;line-height:12.1px;color:#1e1e1e;transform-origin:0 50%;transform:scale(0.9762,1.02);">Dahua NVR PTZ Camera</div>
<div class="a t" style="left:622.00px;top:189.00px;font-size:6.6px;letter-spacing:-0.166px;line-height:8.6px;color:#7c7c7c;transform-origin:0 50%;transform:scale(0.9399,1.12);">Dahua</div>
<div class="a t" style="left:672.50px;top:189.05px;font-size:6.5px;letter-spacing:-0.114px;line-height:8.5px;color:#7c7c7c;transform-origin:0 50%;transform:scale(0.9496,1.12);">8/8/2018 6:01 PM</div>
<div class="a" style="left:770px;top:188.79999999999998px;width:23px;height:8.3px;border-radius:4.2px;background:#0a0a0a"></div>
<div class="a t" style="left:773.00px;top:188.80px;font-size:6.3px;letter-spacing:0.238px;line-height:8.2px;color:#fff;transform:scaleY(1.12);">Local</div>
<div class="a" style="left:619px;top:199.79999999999998px;width:176.5px;height:0.8px;background:#e2e2e2"></div>
<div class="a t" style="left:622.50px;top:202.65px;font-size:9.3px;letter-spacing:-0.072px;line-height:12.1px;color:#1e1e1e;transform-origin:0 50%;transform:scale(0.9791,1.02);">Dahua NVR Fixed Camera</div>
<div class="a t" style="left:622.00px;top:216.50px;font-size:6.6px;letter-spacing:-0.166px;line-height:8.6px;color:#7c7c7c;transform-origin:0 50%;transform:scale(0.9399,1.12);">Dahua</div>
<div class="a t" style="left:672.50px;top:216.55px;font-size:6.5px;letter-spacing:-0.114px;line-height:8.5px;color:#7c7c7c;transform-origin:0 50%;transform:scale(0.9496,1.12);">8/8/2018 5:30 PM</div>
<div class="a" style="left:770px;top:216.29999999999998px;width:23px;height:8.3px;border-radius:4.2px;background:#0a0a0a"></div>
<div class="a t" style="left:773.00px;top:216.30px;font-size:6.3px;letter-spacing:0.238px;line-height:8.2px;color:#fff;transform:scaleY(1.12);">Local</div>
<div class="a" style="left:619px;top:227.29999999999998px;width:176.5px;height:0.8px;background:#e2e2e2"></div>
<div class="a t" style="left:618.10px;top:436.55px;font-size:6.5px;letter-spacing:-0.103px;line-height:8.5px;color:#222;transform-origin:0 50%;transform:scale(0.9471,1.12);">1-2 of 2</div>
<div class="a btn" style="left:710.2px;top:434.6px;width:40.8px;height:11.3px;border-color:#c9c9c9"></div>
<div class="a btn" style="left:755.5px;top:434.6px;width:40.7px;height:11.3px;border-color:#c9c9c9"></div>
<div class="a t" style="left:716.20px;top:436.40px;font-size:6.3px;letter-spacing:-0.038px;line-height:8.2px;color:#858585;transform-origin:0 50%;transform:scale(0.9812,1.12);">&lt; Previous</div>
<div class="a t" style="left:767.30px;top:436.40px;font-size:6.3px;letter-spacing:-0.054px;line-height:8.2px;color:#858585;transform-origin:0 50%;transform:scale(0.9744,1.12);">Next &gt;</div>
<div class="a" style="left:612.4px;top:453.5px;width:184.6px;height:9.3px;background:#f1f1f1"></div>
<div class="a" style="left:623px;top:454.3px;width:157.5px;height:8px;background:#cdcdcd"></div>
<svg class="a" style="left:615.3px;top:455.5px" width="4" height="5.5" viewBox="0 0 4 5.5"><path d="M3.2 0.6L1 2.75L3.2 4.9" fill="none" stroke="#222" stroke-width="1.15"/></svg>
<svg class="a" style="left:789.5px;top:455.5px" width="4" height="5.5" viewBox="0 0 4 5.5"><path d="M0.8 0.6L3 2.75L0.8 4.9" fill="none" stroke="#222" stroke-width="1.15"/></svg>
<div class="a" style="left:0px;top:463px;width:800px;height:14.5px;background:#f3f3f3;border-top:1px solid #d4d4d4"></div>
<div class="a t" style="left:0.30px;top:468.50px;font-size:6.6px;letter-spacing:-0.154px;line-height:8.6px;color:#222;transform-origin:0 50%;transform:scale(0.9228,1.12);">Director Status: Idle</div>
<svg class="a" style="left:659.6px;top:467.4px" width="10" height="10" viewBox="0 0 10 10"><defs><radialGradient id="gg" cx="0.4" cy="0.35" r="0.7"><stop offset="0" stop-color="#c8f070"/><stop offset="1" stop-color="#6cc020"/></radialGradient></defs><circle cx="4.8" cy="4.8" r="4.1" fill="url(#gg)" stroke="#4a9a18" stroke-width="0.7"/></svg>
<div class="a t" style="left:670.90px;top:468.45px;font-size:6.5px;letter-spacing:-0.110px;line-height:8.5px;color:#222;transform-origin:0 50%;transform:scale(0.9501,1.12);">Connected to 192.168.2.127 (SSL)</div>
<div class="a" style="left:0px;top:477.5px;width:800px;height:23.5px;background:#202124"></div>
<div class="a" style="left:218.3px;top:477.5px;width:26.2px;height:23.5px;background:#4a4c50"></div>
<div class="a" style="left:30px;top:499px;width:22px;height:2px;background:#75889c"></div>
<div class="a" style="left:57px;top:499px;width:22px;height:2px;background:#75889c"></div>
<div class="a" style="left:84px;top:499px;width:22px;height:2px;background:#75889c"></div>
<div class="a" style="left:111px;top:499px;width:22px;height:2px;background:#75889c"></div>
<div class="a" style="left:138px;top:499px;width:22px;height:2px;background:#75889c"></div>
<div class="a" style="left:165px;top:499px;width:22px;height:2px;background:#75889c"></div>
<div class="a" style="left:192px;top:499px;width:22px;height:2px;background:#75889c"></div>
<div class="a" style="left:220px;top:499px;width:25px;height:2px;background:#75889c"></div>
<svg class="a" style="left:6.8px;top:485px" width="9.5" height="9.5" viewBox="0 0 10 10"><path d="M0 1.4L4.3 0.8V4.7H0zM4.9 0.7L10 0V4.7H4.9zM0 5.3H4.3V9.2L0 8.6zM4.9 5.3H10V10L4.9 9.3z" fill="#fff"/></svg>
<svg class="a" style="left:34px;top:483.5px" width="12.5" height="11" viewBox="0 0 12.5 11"><path d="M0.3 1H4.5L5.5 2.2H12.2V10.5H0.3z" fill="#e8b838"/><path d="M0.3 3.5H12.2V10.5H0.3z" fill="#f8d868"/><rect x="2.2" y="6" width="8" height="4.5" fill="#58a8e0"/><rect x="3.6" y="7.6" width="5.2" height="2.9" fill="#f4f4f4"/></svg>
<svg class="a" style="left:61.5px;top:484.5px" width="12" height="9.5" viewBox="0 0 12 9.5"><rect x="0" y="0.5" width="12" height="8.5" fill="#2f8fd8"/><rect x="1" y="2" width="10" height="6" fill="#9fd4f4"/><rect x="1.6" y="2.8" width="3.2" height="3.2" fill="#f0f8ff"/><rect x="5.6" y="3" width="4.6" height="0.9" fill="#2f6fb0"/><rect x="5.6" y="4.8" width="4.6" height="0.9" fill="#2f6fb0"/></svg>
<svg class="a" style="left:87px;top:482.8px" width="15" height="14" viewBox="0 0 15 14"><circle cx="4" cy="4" r="3.5" fill="#1ea0d8"/><circle cx="10.8" cy="4" r="3.5" fill="#f0623a"/><circle cx="4" cy="9.8" r="3.5" fill="#3ab54a"/><circle cx="10.8" cy="9.8" r="3.5" fill="#e6359b"/></svg>
<svg class="a" style="left:114px;top:483.5px" width="14.5" height="11.5" viewBox="0 0 14.5 11.5"><path d="M7.2 0.6L13.8 5.7L7.2 10.9L0.7 5.7z" fill="none" stroke="#d02028" stroke-width="1.3"/><path d="M8.4 3L12 5.7L8.4 8.5L4.8 5.7z" fill="#e02830"/></svg>
<svg class="a" style="left:141.5px;top:482.8px" width="14.5" height="13.5" viewBox="0 0 14.5 13.5"><rect x="0.6" y="0.6" width="13.3" height="12.3" rx="2.3" fill="#1a1c1e" stroke="#585c60" stroke-width="0.9"/><path d="M5 3.4L10.6 6.7L5 10.1z" fill="#2a2c2e" stroke="#58b848" stroke-width="1.1"/><path d="M5 3.4L10.6 6.7" stroke="#e0a030" stroke-width="1.1"/></svg>
<svg class="a" style="left:168.8px;top:482.8px" width="14" height="14" viewBox="0 0 14 14"><circle cx="7" cy="7" r="6.2" fill="#2272b4" stroke="#e4eef6" stroke-width="1.3"/><path d="M5.4 4V11.2M5.4 4.6H7.8Q9.6 4.6 9.6 6.3Q9.6 8 7.8 8H6.4" fill="none" stroke="#eef4fa" stroke-width="1.3"/></svg>
<svg class="a" style="left:197px;top:482.5px" width="15" height="14" viewBox="0 0 15 14"><text x="0.8" y="12.8" font-family="Liberation Sans,sans-serif" font-size="17.5" font-weight="bold" fill="#58bdf0">e</text><path d="M0.6 10.5Q-0.8 5 6 2.4Q11.5 0.6 13.6 2.6" fill="none" stroke="#f0c838" stroke-width="1.1"/></svg>
<svg class="a" style="left:223.7px;top:482.5px" width="12.8" height="12.8" viewBox="0 0 9 9"><path d="M6.6 1.5A3.7 3.7 0 1 0 7.9 6" fill="none" stroke="#8e3445" stroke-width="0.95"/><path d="M5.7 2.2L3.1 5.6H7M5.7 2.2V7.4" fill="none" stroke="#8e3445" stroke-width="0.95"/></svg>
<svg class="a" style="left:697px;top:486px" width="7" height="5" viewBox="0 0 7 5"><path d="M0.6 4.2L3.5 1L6.4 4.2" fill="none" stroke="#f0f0f0" stroke-width="0.9"/></svg>
<svg class="a" style="left:709.5px;top:484.5px" width="9.5" height="8.5" viewBox="0 0 9.5 8.5"><rect x="2.2" y="0.5" width="6.8" height="5" fill="none" stroke="#f0f0f0" stroke-width="0.8"/><path d="M4 7.8H7.4M5.7 5.5V7.8" stroke="#f0f0f0" stroke-width="0.8"/><rect x="0.3" y="2" width="2.4" height="4" fill="#202124" stroke="#f0f0f0" stroke-width="0.6"/></svg>
<svg class="a" style="left:723px;top:484.8px" width="10" height="8.5" viewBox="0 0 10 8.5"><path d="M0.5 2.7H2.2L4.4 0.7V6.9L2.2 4.9H0.5z" fill="none" stroke="#f0f0f0" stroke-width="0.7"/><path d="M5.4 4.4L8.4 7.4M8.4 4.4L5.4 7.4" stroke="#e82828" stroke-width="1.25"/></svg>
<div class="a t" style="left:740.10px;top:479.80px;font-size:6.9px;letter-spacing:-0.089px;line-height:9.0px;color:#fff;transform-origin:0 50%;transform:scale(0.9651,1);">4:23 PM</div>
<div class="a t" style="left:738.40px;top:488.60px;font-size:6.9px;letter-spacing:-0.083px;line-height:9.0px;color:#fff;transform-origin:0 50%;transform:scale(0.9649,1);">5/23/2019</div>
<svg class="a" style="left:777.3px;top:484.5px" width="12.6" height="12.6" viewBox="0 0 12 12"><path d="M0.6 0.6H8.8V6.8H3.6L1.8 8.6V6.8H0.6z" fill="none" stroke="#f0f0f0" stroke-width="0.85"/><path d="M2.2 2.4H7.2M2.2 4H7.2" stroke="#f0f0f0" stroke-width="0.6"/><circle cx="8.2" cy="8" r="3.2" fill="#202124" stroke="#e8e8e8" stroke-width="0.6"/><text x="6.9" y="9.9" font-family="Liberation Sans,sans-serif" font-size="5" fill="#fff">4</text></svg>

</div></body></html>
